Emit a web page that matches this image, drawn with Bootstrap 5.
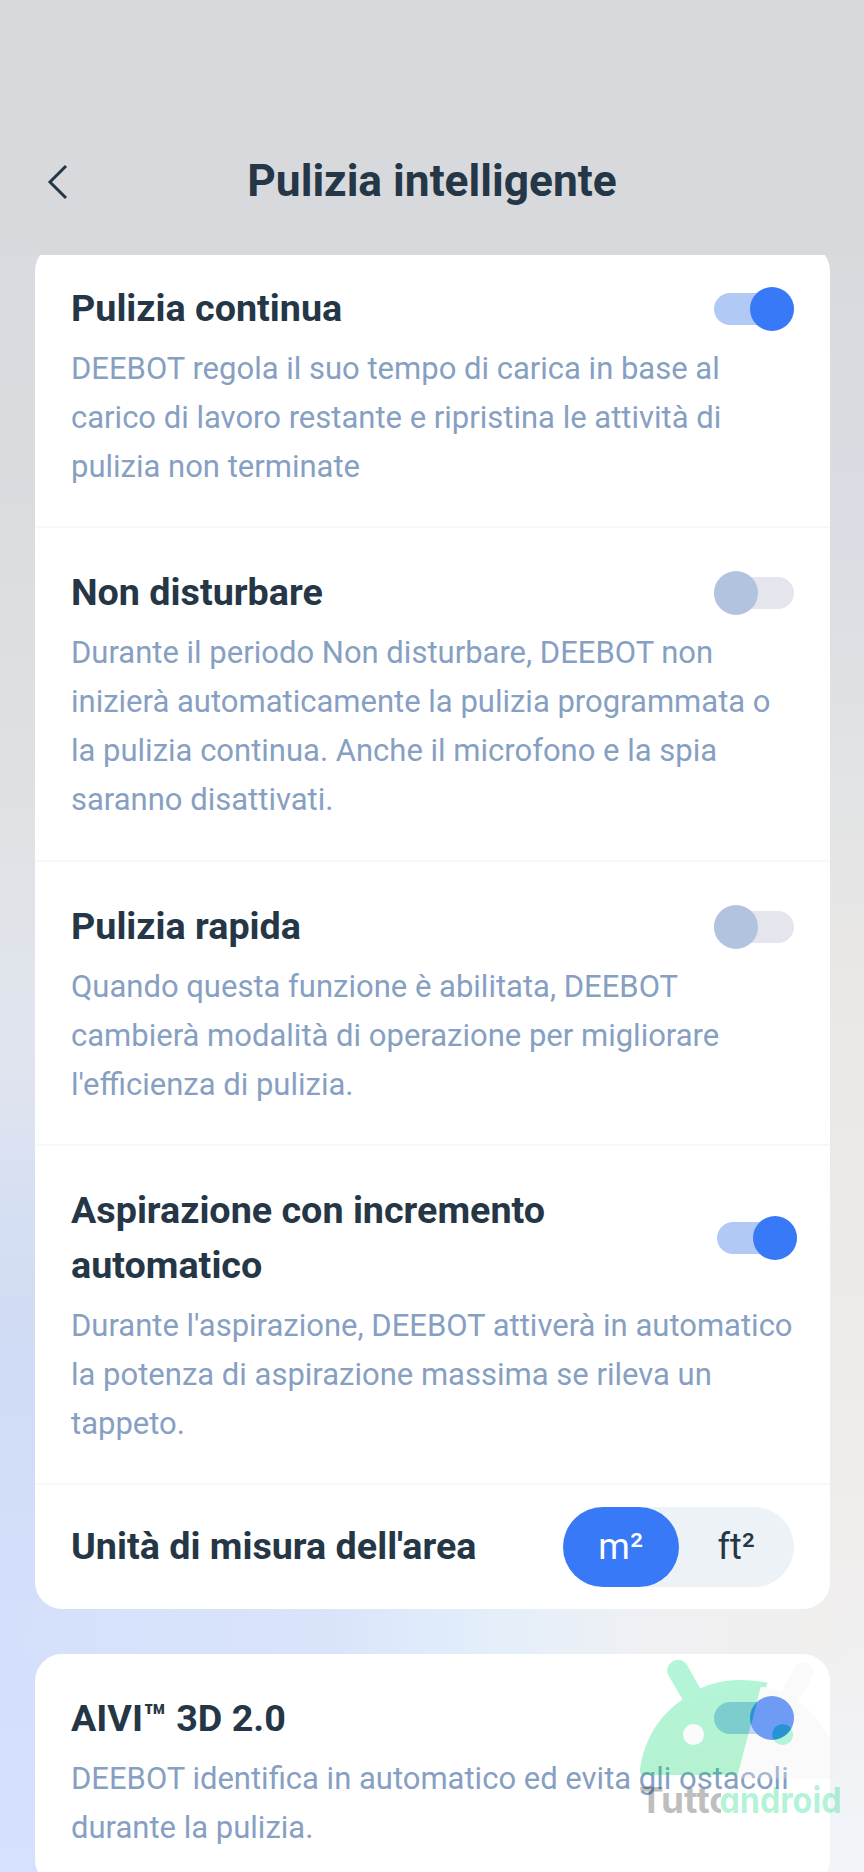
<!DOCTYPE html>
<html lang="it">
<head>
<meta charset="utf-8">
<meta name="viewport" content="width=device-width, initial-scale=1">
<title>Pulizia intelligente</title>
<link href="https://cdn.jsdelivr.net/npm/bootstrap@5.3.0/dist/css/bootstrap.min.css" rel="stylesheet">
<style>
body{font-family:Roboto,"Noto Sans",sans-serif;color:#253746;background:#d8d9dd}
.screen{height:1872px;overflow:hidden;position:relative;
 background:
  linear-gradient(90deg,#d6e1fc00 0,#d5e1fb 5%,#d9e4fb 38%,#e4effa 58%,#f0f0f3 76%,#f0efee 94%,#f0eeec00 100%) 0 1600px/100% 62px no-repeat,
  linear-gradient(180deg,#d8dbdf 0,#d8dcdf 12%,#dcdde1 20%,#dfe1e4 35%,#e0e5ec 45%,#dfe3ef 52%,#d4dff3 60%,#d0dbf5 68%,#d3defa 82%,#d6e1ff 100%) 0 255px/50% 1617px no-repeat,
  linear-gradient(180deg,#d8dade 0,#d9dde3 17%,#dfe2e4 28%,#e5e5e5 38%,#ebe9e6 50%,#edebe8 66%,#f0eeed 80%,#f1f1f3 90%,#f1f5fa 100%) 100% 255px/50% 1617px no-repeat,#d8d9dd}
.topbar{height:255px;padding:108px 36px 0}
.topbar-row{height:147px}
.page-title{font-size:44.3px;font-weight:700;line-height:1}
.list-view{height:1617px;overflow:hidden;padding:0 34.5px 0 35px}
.panel{background:#fff;border-radius:27px}
.panel-first{margin-top:-11px;margin-bottom:45px}
.setting{padding:37px 35.5px 35px 36px;border-bottom:2px solid #f8f8f9}
.setting-tall{padding-bottom:36px}
.setting-title{font-size:37.7px;font-weight:700;line-height:55px;margin:0}
.setting-text{font-size:31px;line-height:49px;color:#869fc2;margin:8px 0 0;white-space:nowrap}
.switch{width:80px;height:44px}
.wide-row{margin-right:-3px}
.track{left:0;top:6px;width:80px;height:32px;background:#b1c9f5;border-radius:16px}
.knob{right:0;top:0;width:44px;height:44px;border-radius:50%;background:#3879f7}
.off .track{background:#e4e5ed}
.off .knob{right:auto;left:0;background:#b1c3de}
.units{width:231px;height:80px;border-radius:40px;background:#edf2f7;font-size:36px}
.unit-row{height:123.5px;padding:0 35.5px 0 36px}
.unit-on{background:#3879f7;color:#fff;border-radius:40px}
.brand-mark{left:630px;top:1650px;pointer-events:none}
.brand-mark text{font-family:Inter,Lato,sans-serif;font-weight:700;font-size:35.5px;font-feature-settings:"cv11"}
</style>
</head>
<body>
<main class="screen">
 <header class="topbar">
  <div class="topbar-row d-flex align-items-center justify-content-center position-relative">
   <svg class="position-absolute start-0 top-50 translate-middle-y" width="44" height="44" viewBox="0 0 44 44" fill="none" stroke="#253746" stroke-width="3"><path d="M30 6L14 22L30 38"/></svg>
   <h1 class="page-title m-0">Pulizia intelligente</h1>
  </div>
 </header>
 <div class="list-view">
  <section class="panel panel-first">
   <div class="setting">
    <div class="d-flex justify-content-between align-items-center"><h2 class="setting-title">Pulizia continua</h2><div class="switch position-relative"><span class="track position-absolute"></span><span class="knob position-absolute"></span></div></div>
    <p class="setting-text">DEEBOT regola il suo tempo di carica in base al<br>carico di lavoro restante e ripristina le attività di<br>pulizia non terminate</p>
   </div>
   <div class="setting setting-tall">
    <div class="d-flex justify-content-between align-items-center"><h2 class="setting-title">Non disturbare</h2><div class="switch off position-relative"><span class="track position-absolute"></span><span class="knob position-absolute"></span></div></div>
    <p class="setting-text">Durante il periodo Non disturbare, DEEBOT non<br>inizierà automaticamente la pulizia programmata o<br>la pulizia continua. Anche il microfono e la spia<br>saranno disattivati.</p>
   </div>
   <div class="setting">
    <div class="d-flex justify-content-between align-items-center"><h2 class="setting-title">Pulizia rapida</h2><div class="switch off position-relative"><span class="track position-absolute"></span><span class="knob position-absolute"></span></div></div>
    <p class="setting-text">Quando questa funzione è abilitata, DEEBOT<br>cambierà modalità di operazione per migliorare<br>l'efficienza di pulizia.</p>
   </div>
   <div class="setting">
    <div class="d-flex justify-content-between align-items-center wide-row"><h2 class="setting-title">Aspirazione con incremento<br>automatico</h2><div class="switch position-relative"><span class="track position-absolute"></span><span class="knob position-absolute"></span></div></div>
    <p class="setting-text">Durante l'aspirazione, DEEBOT attiverà in automatico<br>la potenza di aspirazione massima se rileva un<br>tappeto.</p>
   </div>
   <div class="unit-row d-flex justify-content-between align-items-center">
    <h2 class="setting-title">Unità di misura dell'area</h2>
    <div class="units d-flex"><span class="unit-on w-50 d-flex align-items-center justify-content-center">m²</span><span class="w-50 d-flex align-items-center justify-content-center">ft²</span></div>
   </div>
  </section>
  <section class="panel">
   <div class="setting border-0">
    <div class="d-flex justify-content-between align-items-center"><h2 class="setting-title">AIVI™ 3D 2.0</h2><div class="switch position-relative"><span class="track position-absolute"></span><span class="knob position-absolute"></span></div></div>
    <p class="setting-text">DEEBOT identifica in automatico ed evita gli ostacoli<br>durante la pulizia.</p>
   </div>
  </section>
 </div>
 <svg class="brand-mark position-absolute" width="234" height="180" viewBox="630 1650 234 180">
  <defs>
   <linearGradient id="leaf" x1="0" y1="0" x2="0.300" y2="1"><stop offset="0" stop-color="#00e285"/><stop offset="1" stop-color="#00d462"/></linearGradient>
   <clipPath id="cut"><rect x="630" y="1780" width="91" height="50"/></clipPath>
  </defs>
  <g opacity=".29">
   <!-- left half: antenna, dome, eye -->
   <path fill="url(#leaf)" fill-rule="evenodd" d="M668.500 1675.500C662.500 1664 679 1653 686.800 1664.500L700.300 1688.500C722 1678.500 745 1678.500 767.700 1682.700L765.700 1688L761 1686.700L737.700 1775H643.500Q639.500 1775 640 1769.500C644 1741 658 1716 682.500 1699.500Z"/>
   <circle cx="693.500" cy="1734.500" r="10.500" fill="#f4f4f4"/>
   <!-- right half -->
   <path fill="#f1f1f1" d="M761 1686.700C768 1687.500 775 1689.500 781.500 1691.500L794 1668C802 1656 818 1666 811.500 1678L798 1702C821 1716 835 1743 839.800 1772Q840.500 1778.500 836 1778.500H737Z"/>
   <circle cx="782.700" cy="1734.500" r="10.500" fill="#00d878"/>
   <!-- wordmark: the o is cut where the green half begins -->
   <text x="639" y="1813.200" fill="#222" textLength="93" lengthAdjust="spacingAndGlyphs" clip-path="url(#cut)">Tutto</text>
   <text x="719.500" y="1813.200" fill="#00d878" textLength="122" lengthAdjust="spacingAndGlyphs">android</text>
  </g>
 </svg>
</main>
<script src="https://cdn.jsdelivr.net/npm/bootstrap@5.3.0/dist/js/bootstrap.bundle.min.js"></script>
</body>
</html>
